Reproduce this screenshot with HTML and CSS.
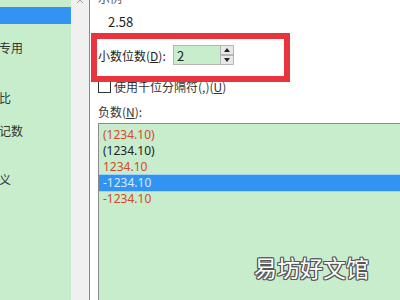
FILE: index.html
```html
<!DOCTYPE html>
<html lang="zh-CN">
<head>
  <meta charset="UTF-8" />
  <title>设置单元格格式 - 数值</title>
  <link rel="stylesheet" href="styles.css">
</head>
<body>
  <div class="dialog">
    <!-- Category list -->
    <ul class="category">
      <li class="active">数值</li>
      <li>货币</li>
      <li>会计专用</li>
      <li>日期</li>
      <li>时间</li>
      <li>百分比</li>
      <li>分数</li>
      <li>科学记数</li>
      <li>文本</li>
      <li>特殊</li>
      <li>自定义</li>
    </ul>
    <div class="scrollbar">
      <svg class="scroll-up" width="8" height="5" viewBox="0 0 8 5"><path d="M1 4 L4 1 L7 4" fill="none" stroke="#9a9a9a" stroke-width="1"/></svg>
    </div>
    <!-- Options -->
    <div class="panel">
      <div class="sample-label">示例</div>
      <div class="sample-value">2.58</div>
      <div class="decimal-row">
        <span class="decimal-label">小数位数(<u>D</u>):</span>
        <span class="spin-input">2</span>
        <span class="spinner">
          <span class="spin-btn"><svg width="6" height="4" viewBox="0 0 6 4"><path d="M0 4 L3 0 L6 4 Z" fill="#222"/></svg></span>
          <span class="spin-btn"><svg width="6" height="4" viewBox="0 0 6 4"><path d="M0 0 L3 4 L6 0 Z" fill="#222"/></svg></span>
        </span>
      </div>
      <div class="thousands-row">
        <span class="checkbox"></span>
        <span>使用千位分隔符(,)(<u>U</u>)</span>
      </div>
      <div class="negative-label">负数(<u>N</u>):</div>
      <ul class="negative-list">
        <li class="red">(1234.10)</li>
        <li>(1234.10)</li>
        <li class="red">1234.10</li>
        <li class="selected">-1234.10</li>
        <li class="red">-1234.10</li>
      </ul>
      <!-- Annotation -->
      <div class="highlight"></div>
    </div>
  </div>
  <div class="watermark">易坊好文馆</div>
</body>
</html>
```

FILE: styles.css
```css
/* Global */
html, body {
  margin: 0;
  padding: 0;
}
body {
  width: 400px;
  height: 300px;
  overflow: hidden;
  position: relative;
  font-family: 'Noto Sans CJK SC', 'Noto Sans', sans-serif;
  font-size: 12px;
  color: #222;
  background: #fff;
}
ul {
  list-style: none;
  margin: 0;
  padding: 0;
}
.dialog {
  display: flex;
  height: 300px;
}
/* Category list */
.category {
  width: 71px;
  flex-shrink: 0;
  background: #c7edcc;
  padding-top: 7px;
  overflow: hidden;
}
.category li {
  height: 16.5px;
  line-height: 16.5px;
  white-space: nowrap;
  text-indent: -25px;
  color: #333;
}
.category li.active {
  background: #3393f3;
  color: #fff;
}
.scrollbar {
  width: 18px;
  flex-shrink: 0;
  background: #f0f0f0;
  border-right: 1px solid #8a8a8a;
  display: flex;
  justify-content: center;
}
.scroll-up {
  margin-top: -1px;
}
/* Options panel */
.panel {
  flex-grow: 1;
  position: relative;
  padding-left: 8px;
  display: flex;
  flex-direction: column;
}
.sample-label {
  line-height: 16px;
  margin-top: -10px;
  color: #555;
}
.sample-value {
  line-height: 16px;
  margin-top: 8px;
  padding-left: 10px;
  font-size: 13px;
}
.decimal-row {
  display: flex;
  align-items: center;
  height: 20px;
  margin-top: 15px;
}
.decimal-label {
  width: 75px;
}
.spin-input {
  width: 47px;
  height: 20px;
  line-height: 20px;
  box-sizing: border-box;
  padding-left: 3px;
  background: #c7edcc;
  border: 1px solid #b5b5b5;
  border-right: none;
  font-size: 13px;
}
.spinner {
  display: flex;
  flex-direction: column;
  width: 14px;
  height: 20px;
}
.spin-btn {
  height: 10px;
  box-sizing: border-box;
  border: 1px solid #b5b5b5;
  background: #e8e8e8;
  display: flex;
  align-items: center;
  justify-content: center;
}
.thousands-row {
  display: flex;
  align-items: center;
  gap: 3px;
  height: 14px;
  margin-top: 14px;
  color: #333;
}
.checkbox {
  width: 11px;
  height: 11px;
  border: 1px solid #333;
  background: #fff;
}
.negative-label {
  line-height: 16px;
  margin-top: 11px;
  color: #333;
}
.negative-list {
  flex-grow: 1;
  margin-top: 3px;
  padding-top: 3px;
  background: #c7edcc;
  border-top: 1px solid #8c8c8c;
  border-left: 1px solid #8c8c8c;
}
.negative-list li {
  height: 16px;
  line-height: 16px;
  padding-left: 4px;
  font-family: 'Noto Sans', sans-serif;
  font-size: 12px;
  color: #222;
}
.negative-list li.red {
  color: #d24a2a;
}
.negative-list li.selected {
  background: #3393f3;
  color: #d6ecff;
  box-shadow: 0 -1px 0 #9fd3f7, 0 1px 0 #9fd3f7;
}
/* Red annotation box */
.highlight {
  position: absolute;
  left: 1px;
  top: 33px;
  width: 199px;
  height: 49px;
  box-sizing: border-box;
  border: 6px solid #e8343c;
}
/* Watermark */
.watermark {
  position: absolute;
  left: 254px;
  top: 252px;
  font-size: 23px;
  line-height: 30px;
  color: #fff;
  text-shadow: 1px 0 0 #555, -1px 0 0 #555, 0 1px 0 #555, 0 -1px 0 #555,
    1px 1px 0 #555, -1px -1px 0 #555, 1px -1px 0 #555, -1px 1px 0 #555;
}
```
